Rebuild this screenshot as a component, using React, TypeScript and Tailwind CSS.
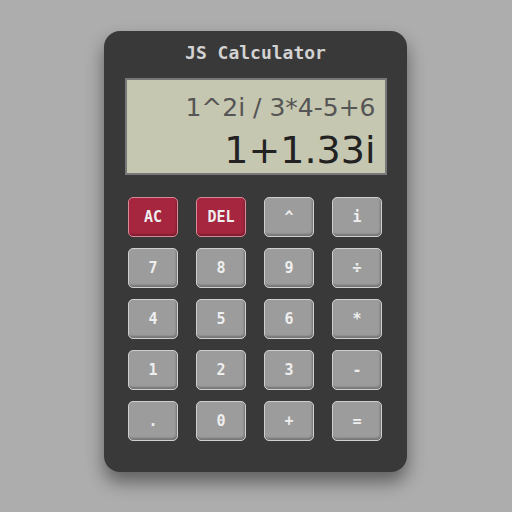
import React from "react";

const keys: { label: string; red?: boolean }[] = [
  { label: "AC", red: true },
  { label: "DEL", red: true },
  { label: "^" },
  { label: "i" },
  { label: "7" },
  { label: "8" },
  { label: "9" },
  { label: "÷" },
  { label: "4" },
  { label: "5" },
  { label: "6" },
  { label: "*" },
  { label: "1" },
  { label: "2" },
  { label: "3" },
  { label: "-" },
  { label: "." },
  { label: "0" },
  { label: "+" },
  { label: "=" },
];

export default function App() {
  return (
    <div className="w-[512px] h-[512px] bg-[#adadad] pt-[31px] pl-[104px]">
      <div className="w-[303px] h-[441px] rounded-[16px] bg-[#393939] shadow-[0_10px_18px_rgba(0,0,0,0.45)] flex flex-col items-center">
        <div
          className="mt-[10px] h-[24px] flex items-center text-[18px] font-bold text-[#d2d2d2] leading-none"
          style={{ fontFamily: '"DejaVu Sans Mono", monospace' }}
        >
          JS Calculator
        </div>
        <div
          className="mt-[13px] w-[262px] h-[97px] bg-[#c6c7b0] border-2 border-[#787878] flex flex-col items-end justify-end pr-[9px] pb-[4px] leading-none"
          style={{ fontFamily: '"DejaVu Sans", sans-serif' }}
        >
          <div className="text-[25px] text-[#555555]">1^2i / 3*4-5+6</div>
          <div className="text-[38px] text-[#222222] mt-[11px]">1+1.33i</div>
        </div>
        <div className="mt-[22px] ml-[-1px] grid grid-cols-4 gap-x-[18px] gap-y-[11px]">
          {keys.map((k) => (
            <div
              key={k.label}
              className={
                "w-[50px] h-[40px] rounded-[5px] border flex items-center justify-center text-[15px] font-bold text-[#eeeeee] shadow-[inset_-1px_-2px_2px_rgba(0,0,0,0.25)] " +
                (k.red
                  ? "bg-[#a7263f] border-[#d98a98]"
                  : "bg-[#9c9c9c] border-[#cfcfcf]")
              }
              style={{ fontFamily: '"DejaVu Sans Mono", monospace' }}
            >
              {k.label}
            </div>
          ))}
        </div>
      </div>
    </div>
  );
}
